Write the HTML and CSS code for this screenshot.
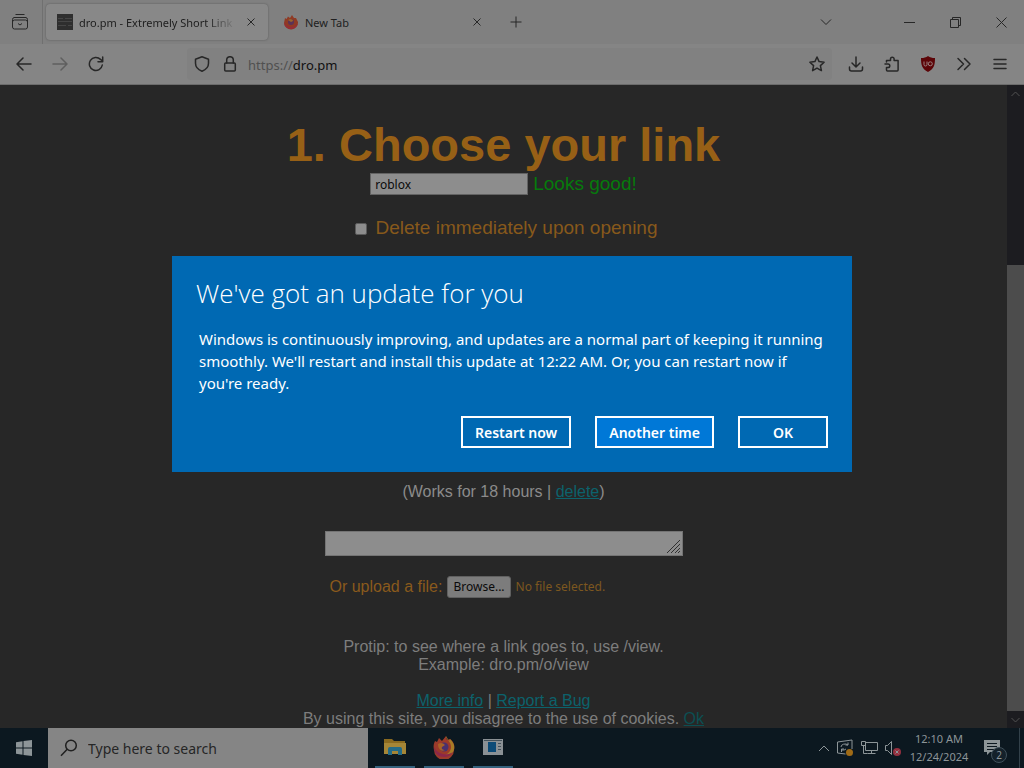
FILE: index.html
```
<!DOCTYPE html>
<html lang="en">
<head>
    <meta charset="UTF-8">
    <meta name="viewport" content="width=device-width, initial-scale=1.0">
    <link rel="stylesheet" href="styles.css">
    <title>dro.pm - Extremely Short Links</title>
</head>
<body>

<div class="workspace">
    <div class="tabstrip">
        <button class="firefox-view" aria-label="Firefox View">
            <svg class="icon" width="18" height="18" viewBox="0 0 18 18"><path d="M4.500 1.500h9M3 4.500h12M3.500 7h11a2 2 0 0 1 2 2v5a2 2 0 0 1-2 2h-11a2 2 0 0 1-2-2V9a2 2 0 0 1 2-2zM1.500 9V6.500a2 2 0 0 1 2-2M16.500 9V6.500a2 2 0 0 0-2-2M7 10.500l2 1.500 2-1.500"/></svg>
        </button>
        <div class="tab active">
            <svg width="16" height="16" viewBox="0 0 16 16"><path fill="#2e2e2e" d="M0 0h16v16H0z"/><path stroke="#454545" d="M1 4.500h5M8 4.500h7M1 7.500h14M1 11.500h8M11 11.500h4"/></svg>
            <span class="tab-title">dro.pm - Extremely Short Link</span>
            <button aria-label="Close tab"><svg class="icon" width="8" height="8" viewBox="0 0 8 8"><path d="M.5.5l7 7M7.500.5l-7 7"/></svg></button>
        </div>
        <div class="tab">
            <svg width="16" height="16" viewBox="0 0 16 16"><path fill="#8f3a24" d="M2 4l1.500 1L5 2.500 7 4l2-3 2 3 2 0 2 4a7 7 0 1 1-14 1z"/><path fill="#962c38" d="M1 8a7 7 0 0 0 14 0c0 3-4 5-7 5S2 11 1 8z"/><circle cx="8" cy="8" r="3" fill="#5b3357"/><path fill="#9b6429" d="M5 6c2-2 5-1 5 1L8 8z"/></svg>
            <span class="tab-title">New Tab</span>
            <button aria-label="Close tab"><svg class="icon" width="8" height="8" viewBox="0 0 8 8"><path d="M.5.5l7 7M7.500.5l-7 7"/></svg></button>
        </div>
        <button class="new-tab" aria-label="New tab"><svg class="icon" width="12" height="12" viewBox="0 0 12 12"><path d="M6 .5v11M.5 6h11"/></svg></button>
        <button class="list-tabs" aria-label="List all tabs"><svg class="icon" width="12" height="8" viewBox="0 0 12 8"><path d="M1 1.500l5 5 5-5"/></svg></button>
        <div class="window-buttons">
            <button aria-label="Minimize"><svg class="icon" width="11" height="11" viewBox="0 0 11 11"><path d="M0 5.500h11"/></svg></button>
            <button aria-label="Restore"><svg class="icon" width="11" height="11" viewBox="0 0 11 11"><path d="M.5 2.500h8v8h-8zM2.500 2.500v-2h8v8h-2"/></svg></button>
            <button aria-label="Close"><svg class="icon" width="11" height="11" viewBox="0 0 11 11"><path d="M.5.5l10 10M10.500.5l-10 10"/></svg></button>
        </div>
    </div>

    <div class="toolbar">
        <div class="nav-buttons">
            <button aria-label="Back"><svg class="icon thick" width="16" height="16" viewBox="0 0 16 16"><path d="M15 8H1.500M7 2L1 8l6 6"/></svg></button>
            <button aria-label="Forward" disabled><svg class="icon thick" width="16" height="16" viewBox="0 0 16 16"><path d="M1 8h13.500M9 2l6 6-6 6"/></svg></button>
            <button aria-label="Reload"><svg class="icon thick" width="16" height="16" viewBox="0 0 16 16"><path d="M14.300 9A6.500 6.500 0 1 1 12.500 3.400L14.500 5M14.700 1v4.700H10"/></svg></button>
        </div>
        <div class="urlbar">
            <svg class="icon thick" width="16" height="16" viewBox="0 0 16 16"><path d="M8 .8l6.500 2.400v4c0 3.800-2.700 6.500-6.500 8-3.800-1.500-6.500-4.200-6.500-8v-4z"/></svg>
            <svg class="icon thick" width="16" height="16" viewBox="0 0 16 16"><rect x="2.700" y="7" width="10.600" height="8" rx="1"/><path d="M4.700 7V4a3.300 3.300 0 0 1 6.600 0v3"/></svg>
            <span class="url"><span class="scheme">https://</span>dro.pm</span>
            <button aria-label="Bookmark"><svg class="icon thick" width="16" height="16" viewBox="0 0 16 16"><path d="M8 1l2.100 4.600 5 .6-3.700 3.400 1 5L8 12.100l-4.400 2.500 1-5L.9 6.200l5-.6z"/></svg></button>
        </div>
        <div class="tools">
            <button aria-label="Downloads"><svg class="icon thick" width="16" height="16" viewBox="0 0 16 16"><path d="M8 1v9.500M4 7l4 4 4-4M1.500 11v2a2 2 0 0 0 2 2h9a2 2 0 0 0 2-2v-2"/></svg></button>
            <button aria-label="Extensions"><svg class="icon thick" width="16" height="16" viewBox="0 0 16 16"><path d="M2.500 6V4.500h4V3a1.800 1.800 0 0 1 3.600 0v1.500h4V14a1 1 0 0 1-1 1H3.500a1 1 0 0 1-1-1v-2.500H4a1.800 1.800 0 0 0 0-3.600H1"/></svg></button>
            <button aria-label="uBlock Origin"><svg width="16" height="16" viewBox="0 0 16 16"><path fill="#5c0508" d="M8 0c2 1.500 4 2 7 2 0 7-1 11-7 14C2 13 1 9 1 2c3 0 5-.5 7-2z"/><path fill="none" stroke="#998080" d="M4 5.500v3a1.500 1.500 0 0 0 3 0v-3"/><circle cx="10.300" cy="7.800" r="2" fill="none" stroke="#998080"/></svg></button>
            <button aria-label="More tools"><svg class="icon thick" width="16" height="16" viewBox="0 0 16 16"><path d="M2 2.500L7.500 8 2 13.500M8.500 2.500L14 8l-5.500 5.500"/></svg></button>
            <button aria-label="Menu"><svg class="icon thick" width="16" height="16" viewBox="0 0 16 16"><path d="M2 3.500h12M2 8h12M2 12.500h12"/></svg></button>
        </div>
    </div>

    <div class="viewport">
        <div class="page">
            <h1>1. Choose your link</h1>
            <div class="link-row">
                <input type="text" id="link" value="roblox" aria-label="Link name">
                <span class="status">Looks good!</span>
            </div>
            <div class="delete-row">
                <input type="checkbox" id="once">
                <label for="once">Delete immediately upon opening</label>
            </div>
            <p class="works">(Works for 18 hours | <a href="#">delete</a>)</p>
            <div class="paste">
                <textarea aria-label="Text or link"></textarea>
                <svg class="grip" width="15" height="15" viewBox="0 0 15 15"><path stroke="#303030" d="M1 14L14 1M5 14l9-9M9 14l5-5M12 14l2-2"/></svg>
            </div>
            <div class="upload">
                <label for="file">Or upload a file:</label>
                <label for="file" class="browse">Browse...</label>
                <input type="file" id="file">
                <span class="filename">No file selected.</span>
            </div>
            <p class="tip">Protip: to see where a link goes to, use /view.<br>Example: dro.pm/o/view</p>
            <p class="foot"><a href="#">More info</a> | <a href="#">Report a Bug</a><br><span class="cookies">By using this site, you disagree to the use of cookies. <a href="#">Ok</a></span></p>
        </div>
        <div class="scrollbar">
            <svg width="9" height="6" viewBox="0 0 9 6"><path d="M.5 5l4-4 4 4"/></svg>
            <div class="thumb"></div>
            <svg width="9" height="6" viewBox="0 0 9 6"><path d="M.5 1l4 4 4-4"/></svg>
        </div>
    </div>

    <div class="overlay">
        <div class="dialog" role="dialog" aria-labelledby="update-title">
            <h2 id="update-title">We've got an update for you</h2>
            <p>Windows is continuously improving, and updates are a normal part of keeping it running smoothly. We'll restart and install this update at 12:22 AM. Or, you can restart now if you're ready.</p>
            <div class="dialog-buttons">
                <button>Restart now</button>
                <button class="focused">Another time</button>
                <button>OK</button>
            </div>
        </div>
    </div>
</div>

<div class="taskbar">
    <button class="start" aria-label="Start">
        <svg width="16" height="16" viewBox="0 0 16 16"><path fill="#8d9598" d="M0 2.200L6.500 1.300v6.200H0zM7.500 1.100L16 0v7.500H7.500zM0 8.500h6.500v6.200L0 13.800zM7.500 8.500H16V16l-8.500-1.100z"/></svg>
    </button>
    <div class="search">
        <svg width="18" height="18" viewBox="0 0 18 18"><circle cx="11" cy="6.500" r="5.300"/><path d="M7.200 10.300L1 16.800"/></svg>
        <input type="text" placeholder="Type here to search" aria-label="Search">
    </div>
    <div class="apps">
        <button aria-label="File Explorer">
            <svg width="22" height="18" viewBox="0 0 22 18"><path fill="#8a6a20" d="M0 1h8l2 2h11v13H0z"/><path fill="#a58637" d="M0 5h22v11H0z"/><path fill="#246b87" d="M4 17v-6q0-2 2-2h10q2 0 2 2v6h-4v-4H8v4z"/></svg>
        </button>
        <button aria-label="Firefox">
            <svg width="24" height="24" viewBox="0 0 24 24"><path fill="#9b3a2a" d="M3 6l2 1 2-4 3 3 4-5 1 4 3-1c4 3 5 7 4 11a10 10 0 0 1-20 0c-1-4 0-7 1-9z"/><path fill="#a87b26" d="M14 1c0 4 5 5 5 11 0 4-3 7-6 8 8 1 10-5 9-10-1-3-3-5-4-6l-1 2z"/><path fill="#8c2749" d="M2 12c0 6 4 10 10 10 4 0 7-2 9-5-6 4-15 3-19-5z"/><circle cx="12" cy="12" r="4.500" fill="#49306e"/><path fill="#a66127" d="M6 9c3-2 5-1 7 1l-3 2c-1 2 1 3 3 3-3 2-7 0-7-6z"/></svg>
        </button>
        <button aria-label="Update window">
            <svg width="22" height="16" viewBox="0 0 22 16"><path fill="#8b9195" d="M1 0h20v16H1z"/><path fill="#0d4b77" d="M6 3h8v10H6z"/><path stroke="#44525b" d="M16 4.500h3M16 7.500h3M16 10.500h3M2 1.500h18"/></svg>
        </button>
    </div>
    <div class="tray">
        <svg width="12" height="8" viewBox="0 0 12 8"><path d="M1 7l5-5 5 5"/></svg>
        <svg width="18" height="18" viewBox="0 0 18 18"><path d="M1.500 3L16 1v9M1.500 3v11l8 1M5 8a4 3 0 0 1 7-2M12 3.500V6H9.500M10 10a4 3 0 0 1-4 1M5.500 13v-3H8"/><circle cx="13.500" cy="13.500" r="3.500" fill="#a06b16" stroke="none"/></svg>
        <svg width="18" height="18" viewBox="0 0 18 18"><path d="M5.500 3.500h12v8h-12zM11.500 11.500v3M7.500 14.500h8M1.500 2.500h4v4h-4zM3.500 6.500v8h4"/></svg>
        <svg width="18" height="18" viewBox="0 0 18 18"><path d="M1.500 6.500h2l4-4v13l-4-4h-2z"/><circle cx="13" cy="13" r="4" fill="#942f3e" stroke="none"/><path d="M11.500 11.500l3 3M14.500 11.500l-3 3"/></svg>
    </div>
    <div class="clock">12:10 AM<br>12/24/2024</div>
    <button class="notifications" aria-label="Notifications">
        <svg width="18" height="18" viewBox="0 0 18 18"><path fill="#8d9598" d="M1 1h16v12H7l-3 3v-3H1z"/><path stroke="#0c1820" d="M4 4.500h10M4 7.500h10M4 10.500h7"/></svg>
        <span class="badge">2</span>
    </button>
    <div class="show-desktop"></div>
</div>

</body>
</html>
```

FILE: styles.css
```
* {
    box-sizing: border-box;
}

body {
    margin: 0;
    height: 100vh;
    display: flex;
    flex-direction: column;
    overflow: hidden;
    background-color: #272727;
    font-family: 'Noto Sans', sans-serif;
}

button {
    display: flex;
    align-items: center;
    justify-content: center;
    padding: 0;
    border: none;
    background: none;
    font-family: inherit;
    color: inherit;
}

svg {
    flex: none;
}

.icon {
    fill: none;
    stroke: #272727;
}

.thick {
    stroke-width: 1.5;
    stroke-linejoin: round;
    stroke-linecap: round;
}

.workspace {
    position: relative;
    flex: 1;
    min-height: 0;
    display: flex;
    flex-direction: column;
}

/* tabs */
.tabstrip {
    display: flex;
    height: 44px;
    background-color: #808080;
    font-size: 11px;
    color: #202020;
}

.firefox-view {
    width: 43px;
    margin-right: 3px;
    padding-right: 2px;
    border-right: 1px solid #707070;
}

.tab {
    display: flex;
    align-items: center;
    gap: 6px;
    width: 222px;
    margin: 4px 4px 4px 0;
    padding: 0 9px 0 11px;
    border-radius: 4px;
}

.tab.active {
    background-color: #888;
    box-shadow: 0 0 2px #555;
}

.tab-title {
    flex: 1;
    overflow: hidden;
    white-space: nowrap;
}

.active .tab-title {
    mask-image: linear-gradient(to left, transparent, #000 30px);
}

.tab button {
    width: 16px;
    height: 16px;
}

.new-tab {
    width: 36px;
}

.list-tabs {
    width: 36px;
    margin-left: auto;
    margin-right: 42px;
}

.window-buttons {
    display: flex;
}

.window-buttons button {
    width: 46px;
}

/* toolbar */
.toolbar {
    display: flex;
    height: 41px;
    background-color: #858585;
    border-bottom: 1px solid #6c6c6c;
}

.nav-buttons,
.tools {
    display: flex;
    padding: 0 6px;
}

.toolbar button {
    width: 36px;
}

.toolbar button:disabled {
    opacity: 0.4;
}

.urlbar {
    flex: 1;
    display: flex;
    align-items: center;
    gap: 12px;
    margin: 4px 0 4px 67px;
    padding-left: 7px;
    border-radius: 4px;
    background-color: #818181;
}

.url {
    flex: 1;
    padding-top: 2px;
    font-size: 13px;
    color: #101010;
}

.urlbar .url {
    margin-left: -2px;
}

.urlbar button {
    width: 30px;
}

.scheme {
    color: #505050;
}

/* web page */
.viewport {
    flex: 1;
    min-height: 0;
    display: flex;
}

.page {
    flex: 1;
    overflow: hidden;
    padding-top: 33px;
    text-align: center;
    font-family: 'Liberation Sans', Arial, sans-serif;
    font-size: 16px;
    line-height: 18px;
    color: #7d7d7d;
}

.page h1 {
    margin: 0;
    font-size: 47px;
    line-height: 54px;
    color: #976016;
}

.page p {
    margin: 0;
}

.page a {
    color: #0c626c;
}

.link-row,
.delete-row,
.upload {
    display: flex;
    align-items: center;
    justify-content: center;
}

.link-row {
    gap: 5px;
    height: 24px;
    font-size: 19px;
}

.link-row input {
    width: 158px;
    height: 22px;
    padding: 1px 4px;
    border: 1px solid #636363;
    background-color: #8d8d8d;
    font-family: 'Noto Sans', sans-serif;
    font-size: 12px;
    color: #0a0a0a;
}

.status {
    color: #067a0c;
}

.delete-row {
    gap: 8px;
    height: 24px;
    margin-top: 20px;
    padding-left: 6px;
    font-size: 19px;
    color: #87591b;
}

.delete-row input {
    appearance: none;
    width: 12px;
    height: 12px;
    margin: 2px 0 0;
    border: 1px solid #5b5b5b;
    border-radius: 2px;
    background-color: #8d8d8d;
}

.page .works {
    margin-top: 243px;
    color: #8b8b8b;
}

.paste {
    position: relative;
    width: 358px;
    height: 25px;
    margin: 30px auto 0;
}

.paste textarea {
    display: block;
    width: 100%;
    height: 100%;
    border: 1px solid #747474;
    background-color: #8d8d8d;
    resize: none;
}

.grip {
    position: absolute;
    right: 2px;
    bottom: 2px;
}

.upload {
    width: 358px;
    height: 22px;
    margin: 20px auto 0;
    padding-left: 5px;
    justify-content: flex-start;
    color: #8a5a1c;
}

.upload input {
    position: absolute;
    width: 1px;
    height: 1px;
    opacity: 0;
}

.browse {
    margin: 0 5px;
    padding: 0 5px;
    border: 1px solid #606060;
    border-radius: 3px;
    background-color: #7c7c7c;
    font-family: 'Noto Sans', sans-serif;
    font-size: 12px;
    line-height: 20px;
    color: #0a0a0a;
}

.filename {
    font-family: 'Noto Sans', sans-serif;
    font-size: 12px;
    color: #7d571f;
}

.page .tip {
    margin-top: 40px;
}

.page .foot {
    margin-top: 18px;
}

.cookies a {
    color: #0c4f53;
}

.scrollbar {
    display: flex;
    flex-direction: column;
    align-items: center;
    width: 17px;
    padding: 6px 0 5px;
    background-color: #1c1c20;
}

.scrollbar svg {
    fill: none;
    stroke: #505050;
}

.thumb {
    width: 100%;
    flex: 1;
    margin-top: 168px;
    margin-bottom: 6px;
    background-color: #4c4c4c;
}

/* update dialog */
.overlay {
    position: absolute;
    inset: 0;
    display: flex;
    align-items: center;
    justify-content: center;
}

.dialog {
    width: 680px;
    padding: 18px 24px 24px;
    background-color: #0069b3;
    color: #fff;
}

.dialog h2 {
    margin: 0 0 16px;
    font-family: 'Open Sans', 'Noto Sans', sans-serif;
    font-size: 26px;
    line-height: 38px;
    font-weight: 300;
}

.dialog p {
    margin: 0 0 22px;
    padding: 0 0 0 3px;
    font-size: 15px;
    line-height: 22px;
}

.dialog-buttons {
    display: flex;
    justify-content: flex-end;
    gap: 24px;
}

.dialog-buttons button {
    min-width: 90px;
    height: 32px;
    padding: 0 12px;
    border: 2px solid #fff;
    font-size: 14px;
    font-weight: 600;
}

.dialog-buttons .focused {
    background-color: #0078d7;
}

/* taskbar */
.taskbar {
    display: flex;
    height: 40px;
    background-color: #0c1820;
    color: #8d9598;
}

.start {
    width: 48px;
}

.search {
    display: flex;
    align-items: center;
    gap: 10px;
    width: 320px;
    padding: 0 12px;
    background-color: #858585;
}

.search svg {
    fill: none;
    stroke: #202020;
    stroke-width: 1.5;
}

.search input {
    flex: 1;
    border: none;
    background: none;
    padding: 0;
    font-family: inherit;
    font-size: 14px;
}

.search input::placeholder {
    color: #262626;
}

.apps {
    display: flex;
    gap: 9px;
    padding-left: 7px;
}

.apps button {
    width: 40px;
    border-bottom: 2px solid #35627e;
}

.tray {
    display: flex;
    align-items: center;
    gap: 6px;
    margin-left: auto;
}

.tray svg {
    fill: none;
    stroke: #8d9598;
}

.clock {
    width: 74px;
    padding-top: 2px;
    text-align: center;
    font-size: 11px;
    line-height: 18px;
}

.notifications {
    position: relative;
    width: 43px;
    padding-right: 12px;
}

.badge {
    position: absolute;
    left: 15px;
    top: 19px;
    width: 16px;
    height: 16px;
    border: 1px solid #40505a;
    border-radius: 50%;
    background-color: #14212a;
    font-size: 10px;
    line-height: 14px;
}

.show-desktop {
    width: 5px;
    border-left: 1px solid #33414a;
}
```
